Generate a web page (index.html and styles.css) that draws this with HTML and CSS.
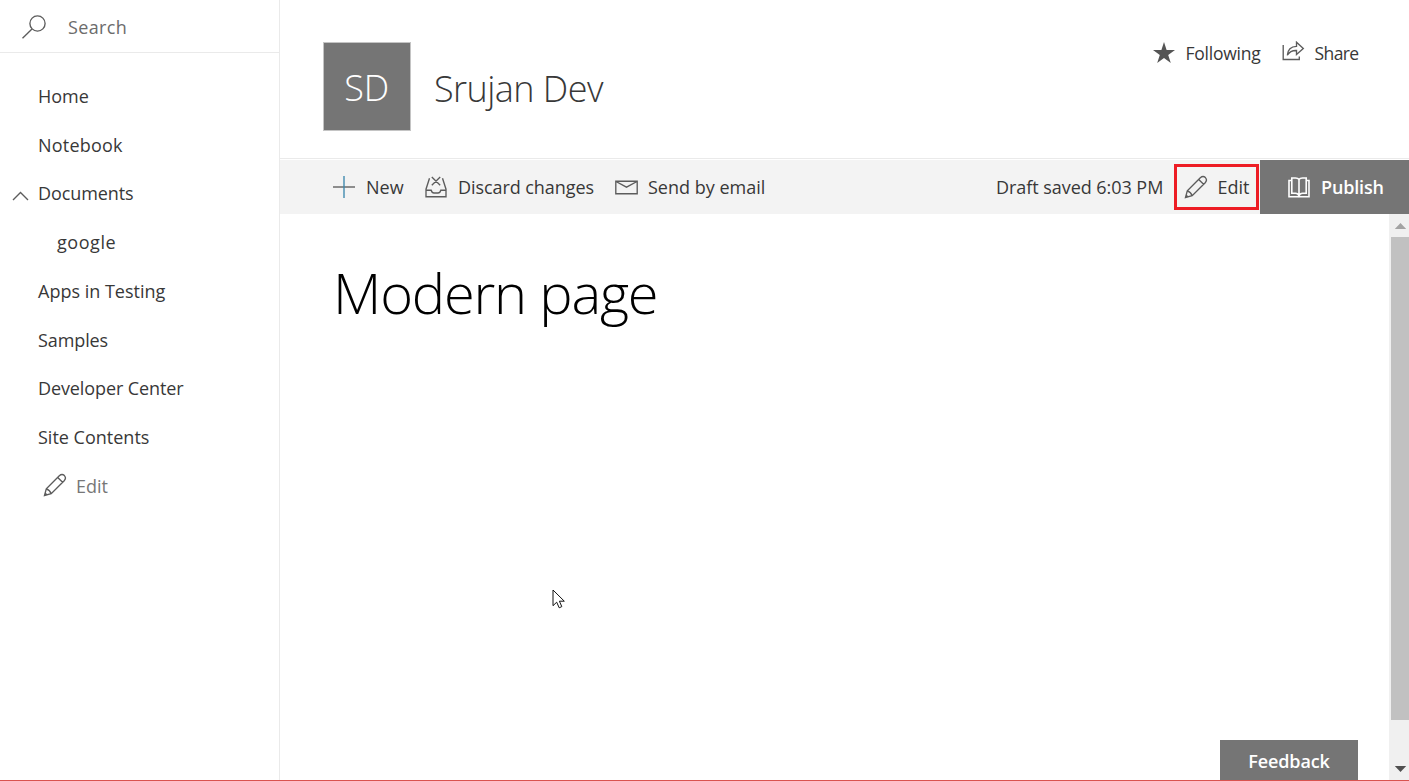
FILE: index.html
```html
<!DOCTYPE html>
<html lang="en">
<head>
<meta charset="utf-8">
<title>Modern page</title>
<link rel="stylesheet" href="styles.css">
</head>
<body>
<div class="app">
  <aside class="sidebar">
    <div class="search">
      <svg class="search-icon" width="26" height="26" viewBox="0 0 26 26"><circle cx="16.5" cy="9.5" r="7.6"/><path d="M11 15L1.5 24.2"/></svg>
      <span class="t-search">Search</span>
    </div>
    <nav class="nav">
      <a class="item"><span class="t-home">Home</span></a>
      <a class="item"><span class="t-notebook">Notebook</span></a>
      <a class="item expandable"><svg class="chevron" width="18" height="10" viewBox="0 0 18 10"><path d="M1 9L8.5 1.5L16 9"/></svg><span class="t-documents">Documents</span></a>
      <a class="item sub"><span class="t-google">google</span></a>
      <a class="item"><span class="t-apps">Apps in Testing</span></a>
      <a class="item"><span class="t-samples">Samples</span></a>
      <a class="item"><span class="t-dev">Developer Center</span></a>
      <a class="item"><span class="t-contents">Site Contents</span></a>
      <a class="item edit-nav"><svg class="icon" width="24" height="24" viewBox="0 0 24 24"><path d="M1.5 22.5L3.3 15.8L16.3 2.8Q19 .4 21.4 2.6Q23.6 5 21.2 7.7L8.2 20.7ZM14.7 4.4L19.6 9.3M3.3 15.8Q7 17 8.2 20.7M2 20L4 22"/></svg><span class="t-edit">Edit</span></a>
    </nav>
  </aside>
  <div class="main">
    <header class="header">
      <div class="logo"><span>SD</span></div>
      <h1 class="site-title">Srujan Dev</h1>
      <div class="actions">
        <svg width="22" height="22" viewBox="0 0 22 22"><path class="fill" d="M11 0L13.6 8H22L15.2 12.9L17.8 21L11 16L4.2 21L6.8 12.9L0 8H8.4Z"/></svg>
        <span class="t-following">Following</span>
        <svg class="icon share" width="23" height="20" viewBox="0 0 23 20"><path d="M1.2 4V18.5H17.3V15.5M5.3 14.2Q6 5.6 14.5 5.3V1.2L21.3 7.5L14.5 13.5V9.5Q8.5 9.2 5.3 14.2Z"/></svg>
        <span class="t-share">Share</span>
      </div>
    </header>
    <div class="toolbar">
      <svg class="icon plus" width="22" height="22" viewBox="0 0 22 22"><path d="M0 11H22"/><path class="blue" d="M11 0V22"/></svg>
      <span class="t-new">New</span>
      <svg class="icon discard" width="22" height="22" viewBox="0 0 22 22"><path d="M4.5 2.2L1 13.2V20.7H21V13.2L17.5 2.2M1 14.2H6.2Q7 17 9 17H13Q15 17 15.8 14.2H21M6.8 1L15.2 9.2M15.2 1L6.8 9.2"/></svg>
      <span class="t-discard">Discard changes</span>
      <svg class="icon mail" width="23" height="15" viewBox="0 0 23 15"><path d="M.8 1.2H22.2V13.7H.8ZM1 1.5L11.5 7.2L22 1.5"/></svg>
      <span class="t-send">Send by email</span>
      <span class="t-draft">Draft saved 6:03 PM</span>
      <a class="edit-box"><svg class="icon" width="24" height="24" viewBox="0 0 24 24"><path d="M1.5 22.5L3.3 15.8L16.3 2.8Q19 .4 21.4 2.6Q23.6 5 21.2 7.7L8.2 20.7ZM14.7 4.4L19.6 9.3M3.3 15.8Q7 17 8.2 20.7M2 20L4 22"/></svg><span class="t-edit">Edit</span></a>
      <a class="publish"><svg class="icon book" width="22" height="21" viewBox="0 0 22 21"><path d="M3.8 3.5H1V19.7H21V3.5H18.2M11 2.5Q10 1 7.5 1H3.8V16.3H7.5Q10 16.3 11 18.8Q12 16.3 14.5 16.3H18.2V1H14.5Q12 1 11 2.5V19"/></svg><span class="t-publish">Publish</span></a>
    </div>
    <div class="body">
      <main class="content"><h2 class="page-title">Modern page</h2></main>
      <div class="scrollbar">
        <svg width="20" height="23" viewBox="0 0 20 23"><path class="up" d="M5.8 15L11.5 9L17.2 15Z"/></svg>
        <div class="thumb"></div>
        <svg class="arrow-down" width="20" height="22" viewBox="0 0 20 22"><path class="down" d="M5.8 8H17.2L11.5 14Z"/></svg>
      </div>
    </div>
  </div>
  <div class="feedback"><span>Feedback</span></div>
  <svg class="cursor" width="14" height="21" viewBox="0 0 14 21"><path d="M1 1V16.7L4.7 13.2L7.2 18.8L9.8 17.6L7.4 12.2H12.3Z"/></svg>
</div>
</body>
</html>
```
FILE: styles.css
```css
* { box-sizing: border-box; }
body { margin: 0; font-family: "Open Sans", "Noto Sans", sans-serif; font-size: 18px; color: #383838; background: #fff; }
span, h1, h2 { white-space: nowrap; }
svg { flex: none; display: block; }
.app { position: relative; width: 1409px; height: 781px; display: flex; overflow: hidden; border-bottom: 1px solid #d9534f; }
.sidebar { width: 280px; flex: none; border-right: 1px solid #eaeaea; }
.search { height: 53px; border-bottom: 1px solid #eaeaea; display: flex; align-items: center; padding: 2px 0 0 21px; gap: 21px; color: #6c6c6c; }
.search-icon, .icon, .chevron { fill: none; stroke: #5c5c5c; stroke-width: 1.35; }
.t-search { letter-spacing: .35px; }
.nav { padding-top: 18.6px; }
.item { height: 48.75px; display: flex; align-items: center; padding-left: 38px; }
.expandable { padding-left: 12px; gap: 8px; }
.chevron { margin-top: 5px; }
.t-notebook { letter-spacing: .2px; }
.t-documents, .t-dev, .t-samples { letter-spacing: -.1px; }
.t-google { letter-spacing: .55px; }
.sub { padding-left: 57px; }
.edit-nav { padding-left: 42.5px; gap: 9.5px; color: #777; }
.edit-nav .icon { margin-top: -2px; }
.main { flex: 1; display: flex; flex-direction: column; }
.header { height: 159px; flex: none; display: flex; border-bottom: 1px solid #eaeaea; padding: 42px 50.5px 0 42.5px; }
.logo { width: 88.5px; height: 89px; background: #757575; border: 1px solid #c4c4c4; color: #fff; font-size: 36px; font-weight: 300; display: flex; align-items: center; justify-content: center; padding-top: 2px; }
.site-title { margin: 17px 0 0 23px; font-size: 36px; font-weight: 300; line-height: 60px; letter-spacing: -.55px; }
.actions { margin-left: auto; height: 22px; display: flex; align-items: center; font-size: 17.5px; }
.fill { fill: #555; }
.t-following { margin-left: 10.5px; width: 75px; letter-spacing: -.25px; }
.share { margin: -4px 10px 0 21px; }
.t-share { width: 44px; letter-spacing: -.6px; }
.toolbar { height: 54px; margin-top: 1px; flex: none; background: #f3f3f3; display: flex; align-items: center; padding-left: 53px; }
.blue { stroke: #3b87ad; }
.t-new { margin-left: 11px; width: 38px; }
.discard { margin: -1px 11px 0 21px; }
.t-discard { width: 137px; letter-spacing: -.07px; }
.mail { margin: 0 10px 0 20px; }
.t-draft { margin-left: auto; width: 168px; letter-spacing: -.05px; }
.edit-box { width: 85px; height: 46px; margin-left: 10px; border: 3px solid #ed1c24; display: flex; align-items: center; padding-left: 7px; gap: 9.5px; }
.publish { width: 149px; height: 54px; margin-left: 1px; background: #757575; color: #fff; font-weight: 600; display: flex; align-items: center; padding-left: 28px; gap: 11px; }
.t-publish { letter-spacing: -.15px; }
.book { stroke: #fff; stroke-width: 1.6; }
.body { flex: 1; display: flex; }
.content { flex: 1; padding: 38px 0 0 53px; }
.page-title { margin: 0; color: #000; font-size: 56px; line-height: 80px; font-weight: 300; letter-spacing: -1.2px; }
.scrollbar { width: 20px; background: #f0f0f0; display: flex; flex-direction: column; }
.thumb { height: 483px; margin-left: 2px; background: #c1c1c1; }
.arrow-down { margin-top: auto; }
.up { fill: #a3a3a3; }
.down { fill: #505050; }
.feedback { position: absolute; left: 1220px; bottom: 0; width: 138px; height: 40px; background: #757575; color: #fff; font-weight: 600; display: flex; align-items: center; justify-content: center; padding-top: 1px; letter-spacing: -.1px; }
.cursor { position: absolute; left: 551.5px; top: 589px; fill: #fff; stroke: #111; stroke-width: 1; }
```
